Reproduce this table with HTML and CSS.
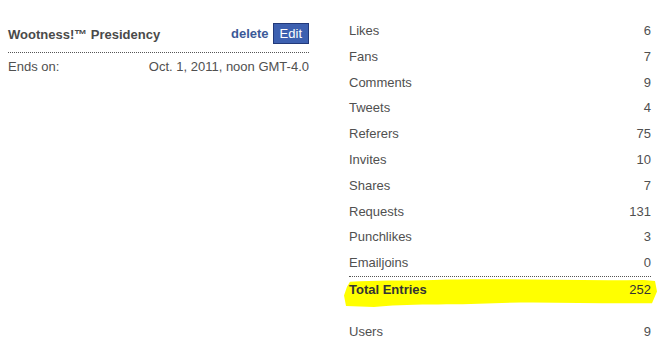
FILE: index.html
```html
<!DOCTYPE html>
<html>
<head>
    <title>Wootness!™ Presidency</title>
    <link rel="stylesheet" href="styles.css">
</head>
<body>
    <div class="page">
        <div class="contest">
            <div class="contest-head">
                <h3>Wootness!™ Presidency</h3>
                <div class="actions">
                    <a href="#" class="delete">delete</a>
                    <button type="button" class="edit">Edit</button>
                </div>
            </div>
            <div class="info-row">
                <span>Ends on:</span>
                <span>Oct. 1, 2011, noon GMT-4.0</span>
            </div>
        </div>

        <div class="stats">
            <div class="stat"><span>Likes</span><span>6</span></div>
            <div class="stat"><span>Fans</span><span>7</span></div>
            <div class="stat"><span>Comments</span><span>9</span></div>
            <div class="stat"><span>Tweets</span><span>4</span></div>
            <div class="stat"><span>Referers</span><span>75</span></div>
            <div class="stat"><span>Invites</span><span>10</span></div>
            <div class="stat"><span>Shares</span><span>7</span></div>
            <div class="stat"><span>Requests</span><span>131</span></div>
            <div class="stat"><span>Punchlikes</span><span>3</span></div>
            <div class="stat"><span>Emailjoins</span><span>0</span></div>
            <div class="stat total">
                <!-- marker stroke behind the total -->
                <svg class="marker" viewBox="0 0 314 30" preserveAspectRatio="none">
                    <path d="M6 4 C30 2 60 3 90 2 C150 0 220 3 300 2 L311 3 L313 14 L308 26 C250 27 200 24 150 26 C110 28 60 26 30 30 L2 29 L0 18 L3 9 Z" fill="#ffff00"/>
                </svg>
                <span>Total Entries</span><span>252</span>
            </div>
            <div class="stat users"><span>Users</span><span>9</span></div>
        </div>
    </div>
</body>
</html>
```

FILE: styles.css
```css
body {
    margin: 0;
    font-family: "Liberation Sans", Arial, sans-serif;
    font-size: 13px;
    color: #505050;
    background-color: #fff;
}

.page {
    display: flex;
    gap: 40px;
    padding: 18px 8px 0 8px;
}

.contest {
    width: 301px;
}

.contest-head {
    display: flex;
    justify-content: space-between;
    align-items: center;
    padding: 5px 0 8px 0;
    border-bottom: 1px dotted #555;
}

.contest-head h3 {
    margin: 0;
    padding-top: 2px;
    font-size: 13px;
    color: #4a4a4a;
}

.actions {
    display: flex;
    align-items: center;
    gap: 4px;
}

.delete {
    color: #3b5998;
    font-weight: bold;
    text-decoration: none;
}

.edit {
    font-family: inherit;
    font-size: 13px;
    color: #fff;
    background-color: #3d60b0;
    border: 1px solid #22397a;
    padding: 2px 6px;
    height: 21px;
    line-height: 15px;
    cursor: pointer;
}

.info-row {
    display: flex;
    justify-content: space-between;
    padding: 6px 0;
    line-height: 15px;
}

.stats {
    width: 302px;
}

.stat {
    display: flex;
    justify-content: space-between;
    padding: 5px 0;
    line-height: 15.8px;
}

.stat.total {
    position: relative;
    border-top: 1px dotted #555;
    font-weight: bold;
    color: #333;
}

.stat.total span:last-child {
    font-weight: normal;
}

.stat.total span {
    position: relative;
}

.marker {
    position: absolute;
    left: -5px;
    top: 1px;
    width: 314px;
    height: 29px;
}

.stat.users {
    margin-top: 16px;
}
```
